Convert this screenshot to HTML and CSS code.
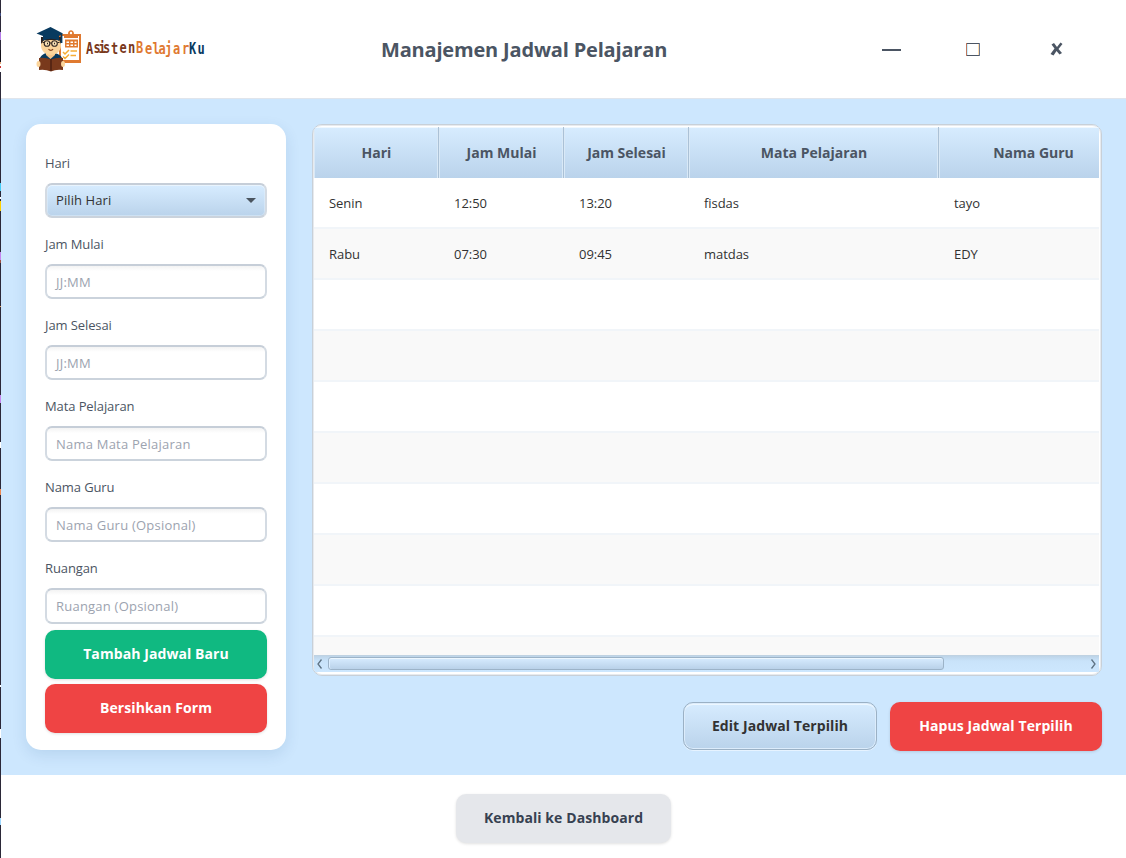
FILE: index.html
```html
<!DOCTYPE html>
<html lang="id">
<head>
<meta charset="utf-8">
<title>Manajemen Jadwal Pelajaran</title>
<link rel="stylesheet" href="styles.css">
</head>
<body>
<div class="edge"></div>
<div class="window">
  <header class="topbar">
    <svg class="logo" width="172" height="50" viewBox="0 0 172 50" role="img" aria-label="AsistenBelajarKu">
      <rect x="24" y="9" width="20" height="27" fill="#fff" stroke="#df7931" stroke-width="2"/>
      <path d="M23 34h22v3H23zM28 8h4c0-5 6-5 6 0h4v4H28z" fill="#e07a30"/>
      <circle cx="35" cy="7" r="1.2" fill="#fff"/>
      <path d="M29 13.500h13v8H29z" fill="#e07a30"/>
      <path d="M30.500 15.500h2.500v1.500h-2.500zm4 0h2.500v1.500h-2.500zm4 0h2v1.500h-2zm-8 3h2.500v1.500h-2.500zm4 0h2.500v1.500h-2.500zm4 0h2v1.500h-2z" fill="#fff"/>
      <path d="M27 26l2 2 4-4M27 30.500l2 2 4-4M34.500 25h6.500M34.500 29.500h5.500" fill="none" stroke="#f6ad35" stroke-width="1.500"/>
      <path d="M3 35c1-5 4-7 7-8h9c4 1 7 3 8 8z" fill="#083a5f"/>
      <path d="M10 25h9v4l-4.500 4L10 29z" fill="#f6c68b"/>
      <path d="M5 12h20v8c0 5-5 9-10 9S5 25 5 20z" fill="#fbd49b"/>
      <path d="M5 18v-7h20v7l-2-4H8z" fill="#2b211f"/>
      <path d="M.500 7.500L14.500 1l12.500 6.500-4 2.500v5c-5-3-11-3-16 0v-5z" fill="#083a5f"/>
      <path d="M25.500 8v9" stroke="#083a5f" stroke-width="1.800"/>
      <g fill="#f9e0b5" stroke="#302723" stroke-width="1.100"><circle cx="11" cy="17.500" r="2.800"/><circle cx="18.500" cy="17.500" r="2.800"/></g>
      <path d="M13.700 17h2M6.500 16.500h1.700M21.500 16.500h2" stroke="#302723"/>
      <path d="M11 17.500h1M18 17.500h1" stroke="#302723" stroke-width="1.500"/>
      <path d="M12.500 23c1.200 1.700 3.500 1.700 4.500 0" fill="none" stroke="#85441f" stroke-width="1.200"/>
      <path d="M3 32q6-1 12 1.500Q21 31 27 32v12q-7-1-12 1.500Q9 43 3 44z" fill="#79391c"/>
      <path d="M15 33v12" stroke="#4e2112" stroke-width="1.500"/>
      <ellipse cx="2.500" cy="38" rx="2" ry="3" fill="#fbd49b"/><ellipse cx="27" cy="38" rx="2" ry="3" fill="#fbd49b"/>
      <g class="wordmark" transform="translate(0 28) scale(1 1.250)">
        <text y="0" x="50 57.500 62.500 67 75 83.500 92" dy="0 -1 0 0 1 -1 0" fill="#79391c">Asisten</text>
        <text y="0" x="100 109 116.500 122.500 129 137 146" dy="-1 1 0 0 0 0 0" fill="#df7931">Belajar</text>
        <text y="0" x="153 161.500" fill="#083a5f">Ku</text>
      </g>
    </svg>
    <h1 class="title">Manajemen Jadwal Pelajaran</h1>
    <div class="controls">
      <svg width="20" height="20" viewBox="0 0 20 20"><path d="M0 11h19" stroke="#4b5563" stroke-width="2"/></svg>
      <svg width="14" height="13" viewBox="0 0 14 13"><path d="M0 .5h14M0 12.500h14" stroke="#4b5563"/><path d="M.5 0v13" stroke="#c0785e"/><path d="M13.500 0v13" stroke="#6c7b96"/><path d="M12.500 1v11" stroke="#ffdcac"/><path d="M1.500 1v11" stroke="#c7efff"/></svg>
      <svg width="13" height="14" viewBox="0 0 13 14"><path d="M1.500 2.500L4 1l3 4 3.500-4.500L12.500 2 8.500 7l3.500 4-2.500 1.500L6.500 9l-3 4.500L.500 12l4-5.500z" fill="#4b5563"/></svg>
    </div>
  </header>
  <main class="main">
    <form class="card">
      <div class="field"><label>Hari</label><div class="combo"><span>Pilih Hari</span><svg width="10" height="6" viewBox="0 0 10 6"><path d="M0 0h10L5 5z" fill="#4a545f"/></svg></div></div>
      <div class="field"><label>Jam Mulai</label><div class="input">JJ:MM</div></div>
      <div class="field"><label>Jam Selesai</label><div class="input">JJ:MM</div></div>
      <div class="field"><label>Mata Pelajaran</label><div class="input">Nama Mata Pelajaran</div></div>
      <div class="field"><label>Nama Guru</label><div class="input">Nama Guru (Opsional)</div></div>
      <div class="field"><label>Ruangan</label><div class="input last">Ruangan (Opsional)</div></div>
      <div class="btn green">Tambah Jadwal Baru</div>
      <div class="btn red">Bersihkan Form</div>
    </form>
    <section class="content">
      <div class="table">
        <div class="grid head"><div>Hari</div><div>Jam Mulai</div><div>Jam Selesai</div><div>Mata Pelajaran</div><div>Nama Guru</div></div>
        <div class="rows">
          <div class="grid row"><div>Senin</div><div>12:50</div><div>13:20</div><div>fisdas</div><div>tayo</div></div>
          <div class="grid row"><div>Rabu</div><div>07:30</div><div>09:45</div><div>matdas</div><div>EDY</div></div>
          <div class="row"></div><div class="row"></div><div class="row"></div><div class="row"></div><div class="row"></div><div class="row"></div><div class="row"></div><div class="row"></div>
        </div>
        <div class="scroll">
          <svg width="14" height="17" viewBox="0 0 14 17"><path d="M7.500 4.500L4 9l3.500 4.500" fill="none" stroke="#5f7384" stroke-width="1.300"/></svg>
          <div class="thumb"></div>
          <svg width="14" height="17" viewBox="0 0 14 17"><path d="M4.500 4.500L8 9l-3.500 4.500" fill="none" stroke="#5f7384" stroke-width="1.300"/></svg>
        </div>
      </div>
      <div class="actions"><div class="btn edit">Edit Jadwal Terpilih</div><div class="btn red hapus">Hapus Jadwal Terpilih</div></div>
    </section>
  </main>
  <footer class="footer"><div class="btn back">Kembali ke Dashboard</div></footer>
</div>
</body>
</html>
```
FILE: styles.css
```css
* { box-sizing: border-box; }
body { margin: 0; width: 1126px; height: 858px; display: flex; overflow: hidden; background: #fff; font-family: "Open Sans", "Noto Sans", sans-serif; font-size: 13px; color: #323232; }
.edge { width: 1px; flex: none; background: linear-gradient(#2b2838 13px, #3d4a80 13px 16px, #2b2838 16px 32px, #b47be8 32px 40px, #2b2838 40px 50px, #121018 50px 62px, #e3a878 62px 64px, #fff 64px 66px, #c33 66px 68px, #fff 68px 72px, #2b2838 72px 183px, #44cdf8 183px 191px, #2b2838 191px 197px, #fff 197px 199px, #2b2838 199px 201px, #ffd000 201px 211px, #2b2838 211px 252px, #c586f0 252px 260px, #a05040 260px 263px, #2b2838 263px 306px, #e5a060 306px 307px, #2b2838 307px 395px, #c586f0 395px 403px, #2b2838 403px 442px, #fff 442px 448px, #2b2838 448px 489px, #ee8850 489px 495px, #2b2838 495px 685px, #fff 685px 687px, #2b2838 687px 729px, #fff 729px 738px, #2b2838 738px 818px, #9ed8ff 818px 825px, #2b2838 825px); }
.window { flex: 1; display: flex; flex-direction: column; }
.topbar { height: 99px; display: flex; align-items: center; border-bottom: 1px solid #e0e5ec; padding-left: 35px; }
.logo { flex: none; margin-top: 3px; }
.wordmark { font-family: "DejaVu Sans Mono", monospace; font-size: 12px; font-weight: 700; }
.title { margin: 1px 0 0 173px; width: 300px; font-size: 20px; line-height: 28px; font-weight: 700; letter-spacing: -.18px; color: #4b5563; white-space: nowrap; }
.controls { display: flex; align-items: center; margin-left: 201px; gap: 64px; }
.controls svg:last-child { margin-left: 6px; }
.main { height: 676px; background: #cde7fe; padding: 25px 24px 25px 25px; display: flex; gap: 26px; }
.card { width: 260px; height: 626px; flex: none; background: #fff; border-radius: 15px; padding: 26px 19px 17px; box-shadow: 0 5px 15px rgba(0,60,120,.11); }
.field { height: 81px; }
.field:nth-child(6) { height: 75px; }
.field label { display: block; height: 33px; line-height: 26px; color: #4b5563; letter-spacing: -.1px; }
.input, .combo { height: 35px; line-height: 33px; border: 2px solid #d0d7e0; border-color: #c6ced8 #d4dbe3 #cbd3dc; border-radius: 7px; padding: 0 9px; background: linear-gradient(#f3f3f3, #fff 5px); color: #9ca3af; letter-spacing: .22px; }
.last { height: 36px; }
.combo { letter-spacing: .1px; display: flex; align-items: center; justify-content: space-between; color: #323232; background: linear-gradient(#d7ecff, #bad3eb); box-shadow: inset 0 0 0 1px #e2f0fc80, inset 0 1px #f0f8ff; }
.combo span { line-height: 31px; }
.btn { height: 49px; border-radius: 10px; display: flex; align-items: center; justify-content: center; font-weight: 700; font-size: 14px; letter-spacing: .08px; padding-bottom: 2px; white-space: nowrap; box-shadow: 0 1px 3px rgba(0,0,0,.12); }
.green { background: #10b981; color: #fff; margin-bottom: 5px; }
.red { background: #ef4444; color: #fff; }
.content { width: 790px; }
.table { height: 552px; border: 1px solid #c8d0d8; border-radius: 10px; padding: 2px 2px 3px 1px; background: #fff; overflow: hidden; box-shadow: inset 0 0 0 1px #e7eaee; }
.grid { display: grid; grid-template-columns: 125px 125px 125px 250px 189px; }
.head { height: 51px; overflow: hidden; }
.head div { display: flex; align-items: center; justify-content: center; font-weight: 700; font-size: 14px; color: #4b5563; padding-left: 1px; border-right: 1px solid #abc1d6; background: linear-gradient(#d7ecff, #bad3eb); box-shadow: inset 0 1px #eff8ff, inset -1px 0 #d9e9f7, inset 1px 0 #d9e9f7; }
.rows { height: 477px; overflow: hidden; }
.row { height: 51px; border-bottom: 2px solid #f1f5f9; background: #fff; }
.row:nth-child(even) { background: #f9f9f9; }
.row div { padding-left: 15px; line-height: 51px; letter-spacing: -.05px; }
.scroll { height: 17px; display: flex; background: linear-gradient(#bdd4e8, #c9e3fa 5px, #cde7fe); border-top: 1px solid #bfd2e2; }
.thumb { width: 616px; height: 13px; margin: 1px 143px 0 0; border: 1px solid #9cb3c8; border-radius: 3px; background: linear-gradient(#d7ecff, #b9d1e9); box-shadow: inset 0 1px #edf7ff, inset 1px 0 #dceeff; flex: none; }
.scroll svg { flex: none; margin-top: -1px; }
.actions { display: flex; justify-content: flex-end; gap: 13px; padding-top: 26px; }
.edit { width: 194px; height: 48px; padding-bottom: 1px; background: linear-gradient(#d7ecff, #bad3eb); border: 1px solid #9bb1c5; box-shadow: inset 0 0 0 1px #dcecfb, inset 0 2px #edf7ff, 0 1px #e6f3ff; }
.hapus { width: 212px; }
.footer { height: 83px; display: flex; justify-content: center; padding-top: 19px; }
.back { width: 215px; background: #e5e7eb; color: #374151; }
```
